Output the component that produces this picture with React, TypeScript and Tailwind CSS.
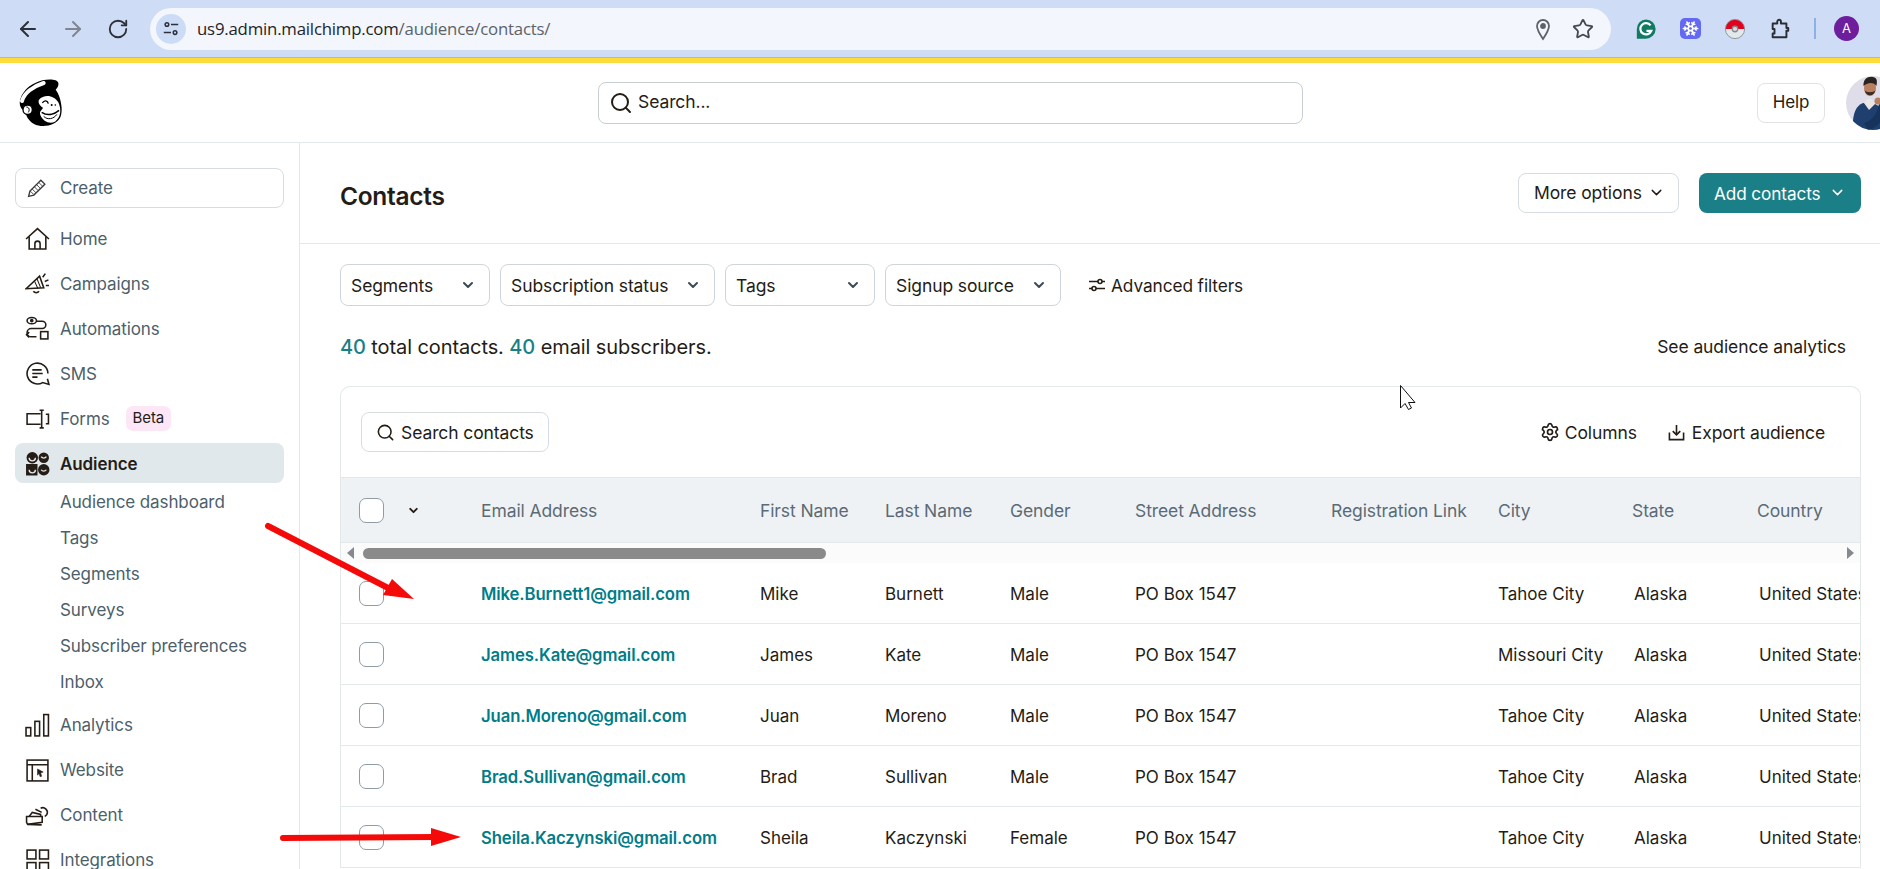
import { ArrowLeft, ArrowRight, RotateCw, Star, Search, ChevronDown, Snowflake, Settings } from 'lucide-react'
import type { ReactNode } from 'react'

const contacts = [
  { email: 'Mike.Burnett1@gmail.com', first: 'Mike', last: 'Burnett', gender: 'Male', city: 'Tahoe City' },
  { email: 'James.Kate@gmail.com', first: 'James', last: 'Kate', gender: 'Male', city: 'Missouri City' },
  { email: 'Juan.Moreno@gmail.com', first: 'Juan', last: 'Moreno', gender: 'Male', city: 'Tahoe City' },
  { email: 'Brad.Sullivan@gmail.com', first: 'Brad', last: 'Sullivan', gender: 'Male', city: 'Tahoe City' },
  { email: 'Sheila.Kaczynski@gmail.com', first: 'Sheila', last: 'Kaczynski', gender: 'Female', city: 'Tahoe City' },
]

const gridCols = 'grid grid-cols-[140px_279px_125px_125px_125px_196px_167px_134px_125px_200px]'

function NavIcon({ children }: { children: ReactNode }) {
  return (
    <svg viewBox="0 0 24 24" className="w-[25px] h-[25px] shrink-0" fill="none" stroke="#241c15" strokeWidth="1.5">
      {children}
    </svg>
  )
}

function NavRow({ icon, label, low, children }: { icon: ReactNode; label: string; low?: boolean; children?: ReactNode }) {
  return (
    <div className="h-[45px] flex items-center pl-[10px]">
      <NavIcon>{icon}</NavIcon>
      <span className={low ? 'ml-[10px] pt-[2px] text-[#4c5f6b]' : 'ml-[10px] text-[#4c5f6b]'}>{label}</span>
      {children}
    </div>
  )
}

function Freddie() {
  return (
    <svg viewBox="0 0 132 144" className="w-[46px] h-[48px] shrink-0">
      <path d="M70 4C90 -1 116 0 118 12C120 22 113 28 110 32C124 50 134 90 124 115C112 140 70 148 45 135C28 126 20 108 18 96C5 92 -1 76 4 60C14 30 40 12 70 4Z" fill="#000" />
      <path d="M9 66C15 42 42 22 74 12" fill="none" stroke="#fff" strokeWidth="12" strokeLinecap="round" />
      <circle cx="26" cy="92" r="14" fill="#fff" stroke="#000" strokeWidth="4" />
      <path d="M22 84C30 84 33 92 28 100" fill="none" stroke="#000" strokeWidth="3" />
      <path d="M60 62C75 44 106 48 118 70C128 92 126 115 108 128C92 136 72 128 64 108C60 96 70 92 72 86C62 80 56 70 60 62Z" fill="#fff" />
      <path d="M68 100C84 110 104 108 120 94" fill="none" stroke="#000" strokeWidth="5" />
      <path d="M74 112C86 124 104 120 114 106" fill="none" stroke="#000" strokeWidth="3" />
      <path d="M70 72C76 62 86 64 88 74" fill="none" stroke="#000" strokeWidth="4" />
      <circle cx="98" cy="78" r="3" fill="#000" />
      <circle cx="109" cy="78" r="2.500" fill="#000" />
    </svg>
  )
}

function Avatar() {
  return (
    <svg viewBox="0 0 54 54" className="w-[54px] h-[54px] rounded-full shrink-0">
      <rect width="54" height="54" fill="#dfdde9" />
      <path d="M7 54C6 40 9 30 17 27L29 28C39 32 41 44 41 54Z" fill="#1f3f6e" />
      <path d="M18 27L23 34L29 28L26 23H21Z" fill="#e9e6e4" />
      <path d="M18 47C26 45 31 38 33 28L40 32C38 44 31 52 22 54Z" fill="#16335c" />
      <ellipse cx="24" cy="12" rx="6" ry="8" fill="#b97f5f" />
      <path d="M17.500 10C17 3 22 0 27 1C32 2 31 6 30.500 10C28 6 22 6 17.500 10Z" fill="#2a2320" />
      <path d="M18.500 14C20 21 28 21 29.500 14C28 17 20 17 18.500 14Z" fill="#3a2b25" />
      <circle cx="32" cy="25" r="3.500" fill="#b97f5f" />
    </svg>
  )
}

function Dropdown({ label, width }: { label: string; width: string }) {
  return (
    <div className={`h-[42px] ${width} flex items-center justify-between pl-[10px] pr-[13px] border-[1.5px] border-[#cfd6db] rounded-[8px] text-[#241c15]`}>
      <span className="pt-[2px]">{label}</span>
      <ChevronDown className="w-[16px] h-[16px]" strokeWidth={3} color="#3d4b54" />
    </div>
  )
}

function Checkbox() {
  return <div className="w-[25px] h-[25px] rounded-[7px] border-[1.5px] border-[#8f9ca5] bg-white shrink-0" />
}

export default function App() {
  return (
    <div className="relative w-[1880px] h-[869px] overflow-hidden bg-white text-[17.5px] font-['Inter',sans-serif] tracking-[-0.1px] flex flex-col">
      {/* browser toolbar */}
      <div className="h-[57px] bg-[#cedcf6] flex items-center pl-[5px] shrink-0">
        <div className="w-[45px] flex justify-center"><ArrowLeft className="w-[24px] h-[24px]" color="#2c3038" strokeWidth={2} /></div>
        <div className="w-[45px] flex justify-center"><ArrowRight className="w-[24px] h-[24px]" color="#80868f" strokeWidth={2} /></div>
        <div className="w-[45px] flex justify-center"><RotateCw className="w-[22px] h-[22px]" color="#2c3038" strokeWidth={2} /></div>
        <div className="ml-[10px] w-[1461px] h-[42px] rounded-full bg-[#f3f6fc] flex items-center pl-[6px] pr-[17px]">
          <div className="w-[30px] h-[30px] rounded-full bg-[#cddcf6] flex items-center justify-center">
            <svg viewBox="0 0 20 20" className="w-[18px] h-[18px]" fill="none" stroke="#2c3038" strokeWidth="1.7">
              <circle cx="5.500" cy="5" r="2" />
              <path d="M10 5h8M2 14h8" />
              <circle cx="14.500" cy="14" r="2" />
            </svg>
          </div>
          <span className="ml-[11px] text-[16.8px] tracking-[-0.2px] font-['Open_Sans',sans-serif] text-[#1f2329]">
            us9.admin.mailchimp.com<span className="text-[#5c6269]">/audience/contacts/</span>
          </span>
          <svg viewBox="0 0 24 24" className="ml-auto w-[24px] h-[24px]" fill="none" stroke="#5f6368" strokeWidth="1.8">
            <path d="M12 22C8 16 6 13 6 9a6 6 0 0112 0c0 4-2 7-6 13Z" />
            <circle cx="12" cy="9" r="2" fill="#5f6368" />
          </svg>
          <Star className="ml-[17px] w-[22px] h-[22px]" color="#45494f" strokeWidth={2} />
        </div>
        <div className="ml-[12px] w-[45px] flex justify-center">
          <svg viewBox="0 0 24 24" className="w-[22px] h-[22px]">
            <path d="M12 1.500a10.500 10.500 0 110 21H2V12A10.500 10.500 0 0112 1.500Z" fill="#127a62" />
            <path d="M17 8a6.200 6.200 0 10.800 6H12.500" fill="none" stroke="#fff" strokeWidth="2.400" />
          </svg>
        </div>
        <div className="w-[45px] flex justify-center">
          <div className="w-[21px] h-[21px] rounded-[5px] bg-[#6469f4] flex items-center justify-center">
            <Snowflake className="w-[17px] h-[17px]" color="#fff" strokeWidth={2.4} />
          </div>
        </div>
        <div className="w-[44px] flex justify-center">
          <svg viewBox="0 0 24 24" className="w-[22px] h-[22px]">
            <path d="M1.500 12a10.500 10.500 0 0121 0Z" fill="#e3001f" />
            <path d="M1.500 12a10.500 10.500 0 0021 0Z" fill="#e3e8ea" />
            <circle cx="12" cy="12" r="10.500" fill="none" stroke="#8b8f93" strokeWidth="1" />
            <circle cx="12" cy="12" r="3" fill="#d7dbdd" stroke="#85898d" strokeWidth="1.400" />
          </svg>
        </div>
        <div className="w-[45px] flex justify-center">
          <svg viewBox="0 0 24 24" className="w-[22px] h-[22px]" fill="none" stroke="#2a2e34" strokeWidth="2.100" strokeLinejoin="round">
            <path d="M4 6h5V4a2 2 0 014 0v2h6v5h2v3h-2v7H4v-4h2v-5H4Z" />
          </svg>
        </div>
        <div className="ml-[12px] w-[2px] h-[21px] bg-[#8fb0e6]" />
        <div className="ml-[18px] w-[25px] h-[25px] rounded-full bg-[#6e1d9c] text-white text-[13px] flex items-center justify-center">A</div>
      </div>
      <div className="h-[6px] bg-[#fedc3c] border-t border-[#b9b9a6] shrink-0" />

      {/* top nav */}
      <div className="h-[80px] flex items-center pl-[18px] border-b border-[#e3e8eb] shrink-0">
        <Freddie />
        <div className="ml-[534px] w-[705px] h-[42px] shrink-0 border-[1.5px] border-[#c6ced4] rounded-[8px] flex items-center pl-[10px] text-[#241c15]">
          <Search className="w-[24px] h-[24px]" strokeWidth={2} />
          <span className="ml-[5px]">Search...</span>
        </div>
        <div className="ml-[454px] w-[68px] h-[40px] shrink-0 border-[1.5px] border-[#e0e2e3] rounded-[8px] flex items-center justify-center text-[17px] text-[#241c15]">Help</div>
        <div className="ml-[21px] shrink-0"><Avatar /></div>
      </div>

      <div className="flex flex-1 min-h-0">
        {/* sidebar */}
        <div className="w-[300px] shrink-0 border-r border-[#e3e8eb] px-[15px] pt-[25px] text-[17px]">
          <div className="h-[40px] border-[1.5px] border-[#d5dde2] rounded-[8px] flex items-center pl-[10px] text-[#4c5f6b]">
            <svg viewBox="0 0 24 24" className="w-[21px] h-[21px]" fill="none" stroke="#3a3a3a" strokeWidth="1.600">
              <path d="M3 21l1.500-6L17 2.500l4.500 4.500L9 19.500Z" />
              <path d="M5 15l4 4M7 12.500l4.500 4.500M9.500 10l4.500 4.500M12 7.500l4.500 4.500M14.500 5l4.500 4.500" strokeWidth="1" />
            </svg>
            <span className="ml-[13px] pt-[2px]">Create</span>
          </div>
          <div className="mt-[8px]">
            <NavRow low label="Home" icon={<><path d="M1 12.500L12 2.500L23 12.500" /><path d="M4 10v12h16V10" /><path d="M9.500 22v-5a2.500 2.500 0 015 0v5" /></>} />
            <NavRow low label="Campaigns" icon={<><path d="M1 17L14 5L18 16Z" /><path d="M9 9.500l3.500 7.500M11.500 7.500l3.500 8.500" strokeWidth="1" /><path d="M8 19.500a3.500 3.500 0 005.500 0" /><path d="M17 6l2.500-3.500M19 10l3.500-1.500M20 14h3" /></>} />
            <NavRow low label="Automations" icon={<><ellipse cx="6.500" cy="4.500" rx="4.500" ry="3" /><circle cx="6.500" cy="4.500" r="1" fill="#241c15" /><path d="M11 5h5.500a3 3 0 010 7H6a3.500 3.500 0 000 8h5" /><path d="M4 15.500L1.500 18l2.500 2.500" /><rect x="15" y="15" width="7" height="7" /></>} />
            <NavRow low label="SMS" icon={<><path d="M22 12a10 10 0 10-5 8.700L23 22.500l-1.500-5.500" /><path d="M7 8.500h9M7 12h10M7 15.500h5" /></>} />
            <NavRow low label="Forms" icon={<><path d="M15 7.500H2v10h13" /><path d="M14 4h4M14 21h4M16 4v17M20 8h2.500v9H20" /></>}>
              <span className="ml-[16px] h-[25px] px-[7px] rounded-[7px] bg-[#fde6f5] text-[#241c15] text-[15px] flex items-center">Beta</span>
            </NavRow>
          </div>
          <div className="mt-[2px] h-[40px] rounded-[8px] bg-[#e1e8eb] flex items-center pl-[10px] font-semibold text-[#241c15]">
            <svg viewBox="0 0 24 24" className="w-[25px] h-[25px] shrink-0">
              <circle cx="7" cy="6.500" r="5.500" fill="#241c15" />
              <circle cx="18" cy="6.500" r="5" fill="#241c15" />
              <rect x="1" y="12.500" width="11" height="11" fill="#241c15" />
              <circle cx="18" cy="18" r="5.500" fill="#241c15" />
              <path d="M4 6.500a3 3 0 006 0M15.500 5.500a3 3 0 005 0M4 18a3 3 0 006 0M15.500 18a3 3 0 005 0" fill="none" stroke="#e1e8eb" strokeWidth="1.300" />
            </svg>
            <span className="ml-[10px] pt-[3px]">Audience</span>
          </div>
          <div className="mt-[1px] pl-[45px] text-[#4c5f6b]">
            {['Audience dashboard', 'Tags', 'Segments', 'Surveys', 'Subscriber preferences', 'Inbox'].map((s) => (
              <div key={s} className="h-[36px] flex items-center pt-[2px]">{s}</div>
            ))}
          </div>
          <div className="mt-[3px]">
            <NavRow label="Analytics" icon={<><rect x="1" y="14" width="4.500" height="8" /><rect x="9.500" y="8" width="4.500" height="14" /><rect x="18" y="1.500" width="4.500" height="20.500" /></>} />
            <NavRow label="Website" icon={<><rect x="2" y="2" width="20" height="20" /><path d="M2 6.500h20M7 6.500V22" /><path d="M12 10.500l5.500 3-2.500 1 1 3-1.500.5-1-3-1.500 1.500Z" fill="#241c15" strokeWidth="0.500" /></>} />
            <NavRow label="Content" icon={<><path d="M1.500 13h15v5.500l-14 2-1-2Z" /><path d="M4 13l3-4 8 2v2M10 6l6 3" /><path d="M15 5a4.500 4.500 0 016 6l-2 2" /><path d="M3 20.500l13 .5" /></>} />
            <NavRow label="Integrations" icon={<><rect x="2" y="2" width="8.500" height="8.500" /><rect x="14" y="2" width="8.500" height="8.500" /><rect x="2" y="14" width="8.500" height="8.500" /><rect x="14" y="14" width="8.500" height="8.500" /></>} />
          </div>
        </div>

        {/* main */}
        <div className="flex-1 min-w-0 text-[#241c15]">
          <div className="h-[101px] border-b border-[#e3e8eb] flex items-center pl-[40px] pr-[19px]">
            <h1 className="text-[24.5px] font-semibold tracking-[-0.3px] mt-[6px]">Contacts</h1>
            <div className="ml-auto w-[161px] h-[40px] mb-[1px] border-[1.5px] border-[#d5dde2] rounded-[8px] flex items-center pl-[15px]">
              <span className="pt-[2px]">More options</span>
              <ChevronDown className="ml-[6px] w-[17px] h-[17px]" strokeWidth={2} />
            </div>
            <div className="ml-[20px] w-[162px] h-[40px] mb-[1px] rounded-[8px] bg-[#1a7f87] text-white flex items-center pl-[15px]">
              <span className="pt-[2px] text-[17.2px]">Add contacts</span>
              <ChevronDown className="ml-[8px] w-[17px] h-[17px]" strokeWidth={2} />
            </div>
          </div>

          <div className="pl-[40px] pr-[19px]">
            <div className="mt-[20px] flex items-center gap-[10px]">
              <Dropdown label="Segments" width="w-[150px]" />
              <Dropdown label="Subscription status" width="w-[215px]" />
              <Dropdown label="Tags" width="w-[150px]" />
              <Dropdown label="Signup source" width="w-[176px]" />
              <svg viewBox="0 0 18 18" className="ml-[17px] w-[18px] h-[18px]" fill="none" stroke="#241c15" strokeWidth="1.600">
                <path d="M1 5.500h9M14 5.500h3M1 12.500h3M8 12.500h9" />
                <circle cx="12" cy="5.500" r="2" />
                <circle cx="6" cy="12.500" r="2" />
              </svg>
              <span className="-ml-[5px] pt-[2px] text-[17.3px]">Advanced filters</span>
            </div>

            <div className="mt-[28px] h-[26px] flex items-center justify-between pr-[15px]">
              <div className="text-[20px] tracking-[-0.1px]">
                <span className="text-[#1a7f87] font-medium">40</span> total contacts. <span className="text-[#1a7f87] font-medium">40</span> email subscribers.
              </div>
              <span className="pt-[1px]">See audience analytics</span>
            </div>

            {/* table card */}
            <div className="mt-[26px] border-x border-t border-[#e3e8eb] rounded-t-[10px] overflow-hidden">
              <div className="h-[90px] flex items-center pl-[20px] pr-[35px]">
                <div className="w-[188px] h-[40px] border-[1.5px] border-[#d5dde2] rounded-[8px] flex items-center pl-[14px]">
                  <Search className="w-[19px] h-[19px]" strokeWidth={2} />
                  <span className="ml-[6px] pt-[2px]">Search contacts</span>
                </div>
                <Settings className="ml-auto w-[20px] h-[20px]" strokeWidth={2} />
                <span className="ml-[5px] pt-[2px]">Columns</span>
                <svg viewBox="0 0 18 18" className="ml-[31px] w-[17px] h-[17px]" fill="none" stroke="#241c15" strokeWidth="1.700">
                  <path d="M9 1v10M5 7.500l4 4 4-4" />
                  <path d="M1.500 9v7.500h15V9" />
                </svg>
                <span className="ml-[7px] pt-[2px]">Export audience</span>
              </div>

              <div className={`${gridCols} h-[66px] items-center bg-[#eff2f5] border-y border-[#e3e8eb] text-[#5b6b75]`}>
                <div className="flex items-center pl-[18px]">
                  <Checkbox />
                  <ChevronDown className="ml-[23px] w-[13px] h-[13px]" color="#241c15" strokeWidth={3.5} />
                </div>
                <div className="pt-[2px]">Email Address</div>
                <div className="pt-[2px]">First Name</div>
                <div className="pt-[2px]">Last Name</div>
                <div className="pt-[2px]">Gender</div>
                <div className="pt-[2px]">Street Address</div>
                <div className="pt-[2px]">Registration Link</div>
                <div className="pt-[2px]">City</div>
                <div className="pt-[2px]">State</div>
                <div className="pt-[2px]">Country</div>
              </div>

              <div className="h-[20px] bg-[#fbfbfb] flex items-center pl-[6px] pr-[6px]">
                <div className="w-0 h-0 border-y-[6px] border-y-transparent border-r-[7px] border-r-[#858a8f]" />
                <div className="ml-[9px] w-[463px] h-[11px] rounded-full bg-[#8a8a8a]" />
                <div className="ml-auto w-0 h-0 border-y-[6px] border-y-transparent border-l-[7px] border-l-[#858a8f]" />
              </div>

              {contacts.map((c) => (
                <div key={c.email} className={`${gridCols} h-[61px] items-center border-b-[1.5px] border-[#e3e8eb] text-[17px] tracking-normal`}>
                  <div className="pl-[18px]"><Checkbox /></div>
                  <div className="text-[#007c89] font-semibold text-[16.7px] tracking-[-0.1px] pt-[4px]">{c.email}</div>
                  <div className="pt-[4px]">{c.first}</div>
                  <div className="pt-[4px]">{c.last}</div>
                  <div className="pt-[4px]">{c.gender}</div>
                  <div className="pt-[4px]">PO Box 1547</div>
                  <div />
                  <div className="pt-[4px]">{c.city}</div>
                  <div className="pl-[2px] pt-[4px]">Alaska</div>
                  <div className="pl-[2px] pt-[4px] whitespace-nowrap">United States</div>
                </div>
              ))}
            </div>
          </div>
        </div>
      </div>

      {/* annotations drawn over the page */}
      <svg viewBox="0 0 1880 869" className="absolute inset-0 w-[1880px] h-[869px] pointer-events-none">
        <path d="M268 526L392 590" stroke="#f50a0a" strokeWidth="6" strokeLinecap="round" fill="none" />
        <path d="M414 599L392 579L383 595Z" fill="#f50a0a" />
        <path d="M283 838L435 837" stroke="#f50a0a" strokeWidth="6" strokeLinecap="round" fill="none" />
        <path d="M461 837L431 828V846Z" fill="#f50a0a" />
        <path d="M1400.500 385.500V408L1405 403.500L1408.500 409.500L1411.500 408L1408.500 402.500H1415Z" fill="#fff" stroke="#111" strokeWidth="1" />
      </svg>
    </div>
  )
}
